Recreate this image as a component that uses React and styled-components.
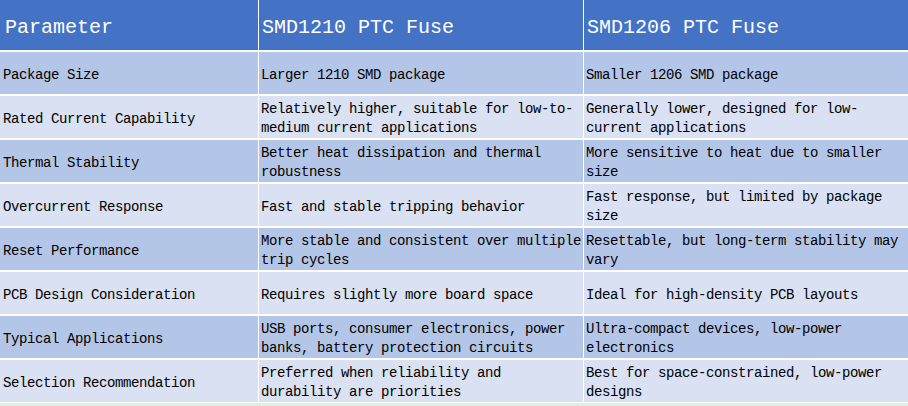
import React from 'react';
import styled, { createGlobalStyle } from 'styled-components';

const GlobalStyle = createGlobalStyle`
  html, body {
    margin: 0;
    padding: 0;
    background: #e2efda;
  }
`;

const Table = styled.div`
  display: grid;
  grid-template-columns: 258px 324px 326px;
  column-gap: 1px;
  row-gap: 2px;
  width: 908px;
  background: #ffffff;
  padding-bottom: 1px;
  font-family: "Liberation Mono", "DejaVu Sans Mono", monospace;
`;

const HeadCell = styled.div`
  height: 50px;
  display: flex;
  align-items: center;
  padding: 5px 0 0 ${(p) => (p.first ? '5px' : '3px')};
  box-sizing: border-box;
  background: #4472c4;
  color: #ffffff;
  font-size: 20px;
  white-space: nowrap;
`;

const Cell = styled.div`
  height: 42px;
  display: flex;
  flex-direction: column;
  justify-content: center;
  padding: 4px 0 0 ${(p) => (p.first ? '3px' : '2px')};
  box-sizing: border-box;
  background: ${(p) => (p.dark ? '#b4c6e7' : '#d9e1f2')};
  color: #000000;
  font-size: 14px;
  letter-spacing: -0.4px;
  line-height: 19px;
  white-space: nowrap;
`;

const headers = ['Parameter', 'SMD1210 PTC Fuse', 'SMD1206 PTC Fuse'];

const rows = [
  ['Package Size', ['Larger 1210 SMD package'], ['Smaller 1206 SMD package']],
  [
    'Rated Current Capability',
    ['Relatively higher, suitable for low-to-', 'medium current applications'],
    ['Generally lower, designed for low-', 'current applications'],
  ],
  [
    'Thermal Stability',
    ['Better heat dissipation and thermal', 'robustness'],
    ['More sensitive to heat due to smaller', 'size'],
  ],
  [
    'Overcurrent Response',
    ['Fast and stable tripping behavior'],
    ['Fast response, but limited by package', 'size'],
  ],
  [
    'Reset Performance',
    ['More stable and consistent over multiple', 'trip cycles'],
    ['Resettable, but long-term stability may', 'vary'],
  ],
  [
    'PCB Design Consideration',
    ['Requires slightly more board space'],
    ['Ideal for high-density PCB layouts'],
  ],
  [
    'Typical Applications',
    ['USB ports, consumer electronics, power', 'banks, battery protection circuits'],
    ['Ultra-compact devices, low-power', 'electronics'],
  ],
  [
    'Selection Recommendation',
    ['Preferred when reliability and', 'durability are priorities'],
    ['Best for space-constrained, low-power', 'designs'],
  ],
];

const Lines = ({ lines }) => lines.map((line, i) => <span key={i}>{line}</span>);

const App = () => {
  return (
    <>
      <GlobalStyle />
      <Table>
        {headers.map((h, i) => (
          <HeadCell key={h} first={i === 0}>
            {h}
          </HeadCell>
        ))}
        {rows.map(([param, a, b], idx) => {
          const dark = idx % 2 === 0;
          return (
            <React.Fragment key={param}>
              <Cell dark={dark} first>
                {param}
              </Cell>
              <Cell dark={dark}>
                <Lines lines={a} />
              </Cell>
              <Cell dark={dark}>
                <Lines lines={b} />
              </Cell>
            </React.Fragment>
          );
        })}
      </Table>
    </>
  );
};

export default App;
